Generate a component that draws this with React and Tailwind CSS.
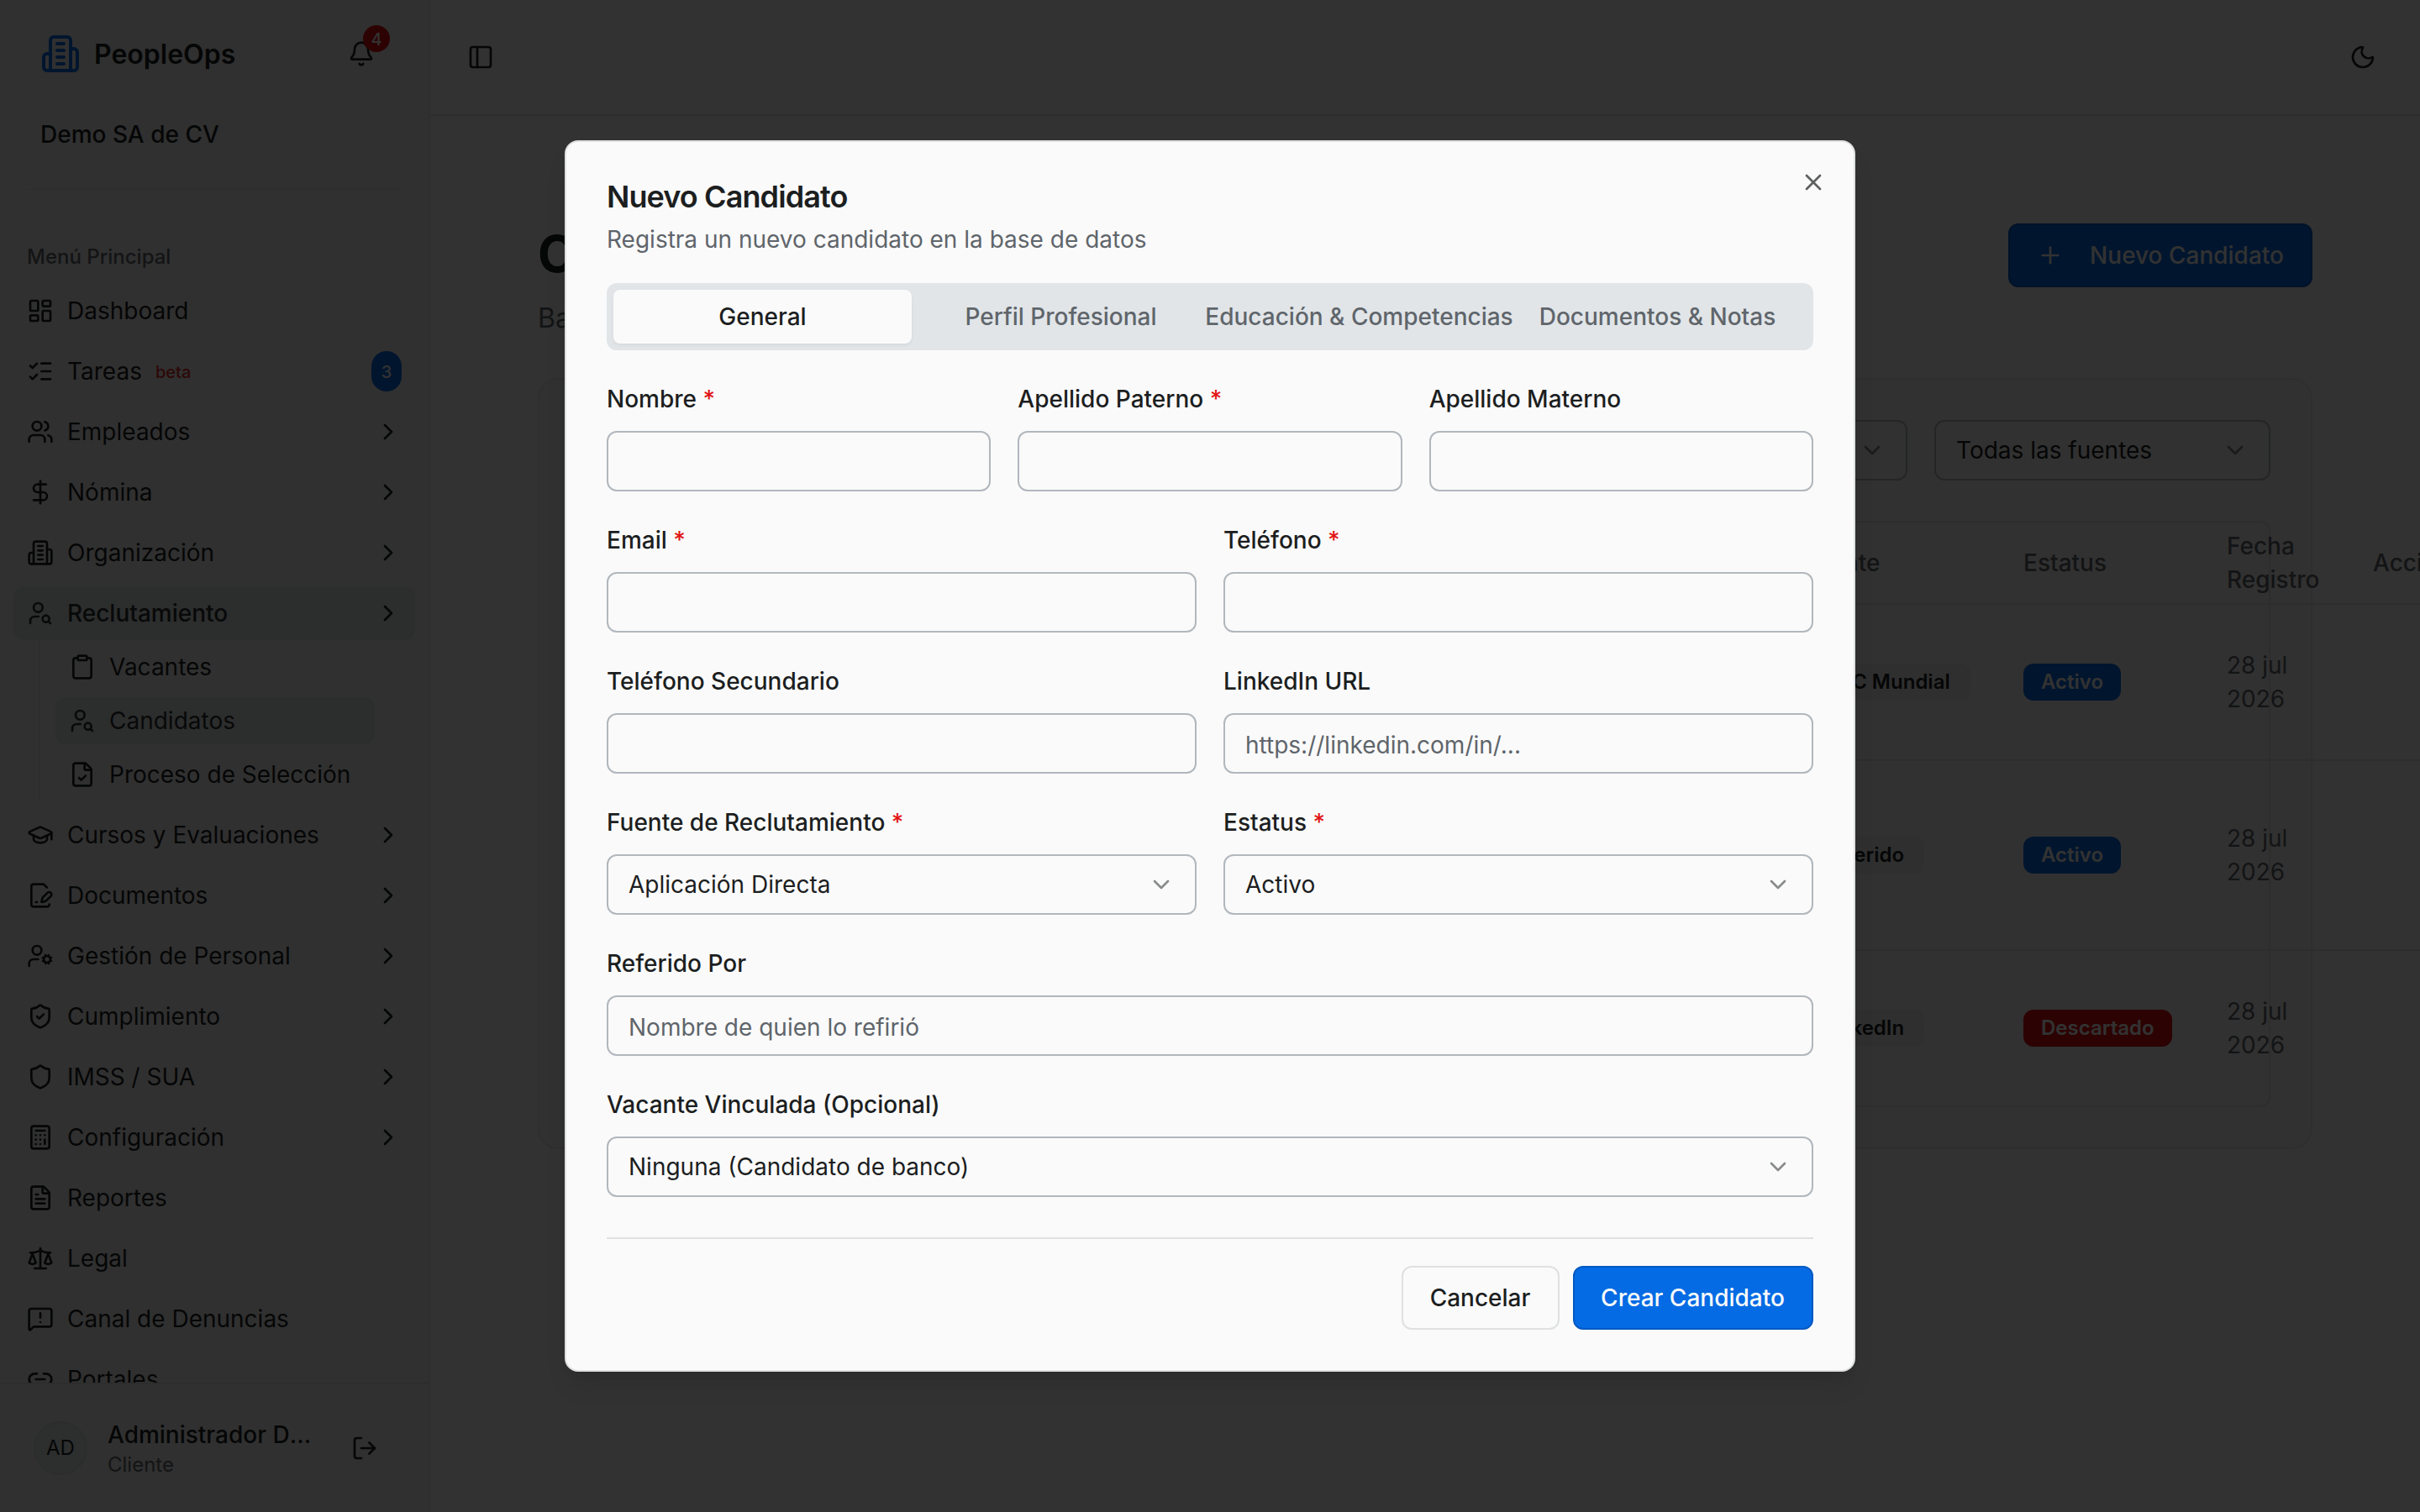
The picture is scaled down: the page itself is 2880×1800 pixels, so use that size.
import React, { useState } from 'react';
import {
    Bell,
    Calculator,
    ChevronDown,
    ChevronRight,
    Clipboard,
    DollarSign,
    FileCheck,
    FileText,
    GraduationCap,
    LayoutDashboard,
    Link2,
    ListChecks,
    MessageSquareWarning,
    Moon,
    PanelLeft,
    Plus,
    Scale,
    Shield,
    ShieldCheck,
    Users,
    X,
} from 'lucide-react';
import clsx from 'clsx';

const svgProps = {
    viewBox: '0 0 24 24',
    fill: 'none',
    stroke: 'currentColor',
    strokeWidth: 2,
    strokeLinecap: 'round',
    strokeLinejoin: 'round',
};

function BuildingIcon({ className }) {
    return (
        <svg {...svgProps} className={className}>
            <path d="M6 22V4a2 2 0 0 1 2-2h8a2 2 0 0 1 2 2v18Z" />
            <path d="M6 12H4a2 2 0 0 0-2 2v6a2 2 0 0 0 2 2h2" />
            <path d="M18 9h2a2 2 0 0 1 2 2v9a2 2 0 0 1-2 2h-2" />
            <path d="M10 6h4" />
            <path d="M10 10h4" />
            <path d="M10 14h4" />
            <path d="M10 18h4" />
        </svg>
    );
}

function UserSearchIcon({ className }) {
    return (
        <svg {...svgProps} className={className}>
            <circle cx="10" cy="7" r="4" />
            <path d="M10.3 15H7a4 4 0 0 0-4 4v2" />
            <circle cx="17" cy="17" r="3" />
            <path d="m21 21-1.9-1.9" />
        </svg>
    );
}

function UserCogIcon({ className }) {
    return (
        <svg {...svgProps} className={className}>
            <circle cx="9" cy="7" r="4" />
            <path d="M10 15H6a4 4 0 0 0-4 4v2" />
            <circle cx="18" cy="15" r="3" />
            <path d="m21.7 16.4-.9-.3" />
            <path d="m15.2 13.9-.9-.3" />
            <path d="m16.6 18.7.3-.9" />
            <path d="m19.1 12.2.3-.9" />
            <path d="m19.6 18.7-.4-1" />
            <path d="m16.8 12.3-.4-1" />
            <path d="m14.3 16.6 1-.4" />
            <path d="m20.7 13.8 1-.4" />
        </svg>
    );
}

function FilePenIcon({ className }) {
    return (
        <svg {...svgProps} className={className}>
            <path d="m18 5-2.414-2.414A2 2 0 0 0 14.172 2H6a2 2 0 0 0-2 2v16a2 2 0 0 0 2 2h12a2 2 0 0 0 2-2" />
            <path d="M21.378 12.626a1 1 0 0 0-3.004-3.004l-4.01 4.012a2 2 0 0 0-.506.854l-.837 2.87a.5.5 0 0 0 .62.62l2.87-.837a2 2 0 0 0 .854-.506z" />
            <path d="M8 18h1" />
        </svg>
    );
}

function LogOutIcon({ className }) {
    return (
        <svg {...svgProps} className={className}>
            <path d="M9 21H5a2 2 0 0 1-2-2V5a2 2 0 0 1 2-2h4" />
            <path d="m16 17 5-5-5-5" />
            <path d="M21 12H9" />
        </svg>
    );
}

const menu = [
    { label: 'Dashboard', icon: LayoutDashboard },
    { label: 'Tareas', icon: ListChecks, tag: 'beta', count: 3 },
    { label: 'Empleados', icon: Users, expandable: true },
    { label: 'Nómina', icon: DollarSign, expandable: true },
    { label: 'Organización', icon: BuildingIcon, expandable: true },
    {
        label: 'Reclutamiento',
        icon: UserSearchIcon,
        expandable: true,
        active: true,
        children: [
            { label: 'Vacantes', icon: Clipboard },
            { label: 'Candidatos', icon: UserSearchIcon, active: true },
            { label: 'Proceso de Selección', icon: FileCheck },
        ],
    },
    { label: 'Cursos y Evaluaciones', icon: GraduationCap, expandable: true },
    { label: 'Documentos', icon: FilePenIcon, expandable: true },
    { label: 'Gestión de Personal', icon: UserCogIcon, expandable: true },
    { label: 'Cumplimiento', icon: ShieldCheck, expandable: true },
    { label: 'IMSS / SUA', icon: Shield, expandable: true },
    { label: 'Configuración', icon: Calculator, expandable: true },
    { label: 'Reportes', icon: FileText },
    { label: 'Legal', icon: Scale },
    { label: 'Canal de Denuncias', icon: MessageSquareWarning },
    { label: 'Portales', icon: Link2 },
];

const candidates = [
    { source: 'OCC Mundial', status: 'Activo', date: '28 jul 2026', height: 'h-[186px] border-b-2' },
    { source: 'Referido', status: 'Activo', date: '28 jul 2026', height: 'h-[226px] border-b-2' },
    { source: 'LinkedIn', status: 'Descartado', date: '28 jul 2026', height: 'h-[184px]' },
];

const tabs = ['General', 'Perfil Profesional', 'Educación & Competencias', 'Documentos & Notas'];

function MenuItem({ item }) {
    const Icon = item.icon;
    return (
        <li>
            <button
                className={clsx(
                    'flex h-16 w-full items-center gap-4 rounded-xl px-4 text-left text-[28px]',
                    item.active && 'bg-[#dce2e2] font-medium text-[#2c2f31]'
                )}
            >
                <Icon className="size-8 shrink-0" />
                <span>{item.label}</span>
                {item.tag && <span className="pt-0.5 text-[20px] font-medium text-[#e12828]">{item.tag}</span>}
                {item.count && (
                    <span className="ml-auto flex h-12 w-9 items-center justify-center rounded-full bg-[#056be4] pt-px text-[20px] font-medium text-[#fafafa]">
                        {item.count}
                    </span>
                )}
                {item.expandable && <ChevronRight className="ml-auto size-8 text-[#1c1e1f]" />}
            </button>
            {item.children && (
                <ul className="ml-[30px] mr-[26px] flex flex-col gap-2 border-l-2 border-[#dfe1e1] py-1 pl-[18px] pr-[22px]">
                    {item.children.map((child) => (
                        <li
                            key={child.label}
                            className={clsx(
                                'flex h-14 items-center gap-4 rounded-xl px-4 text-[28px]',
                                child.active && 'bg-[#dce2e2] text-[#2c2f31]'
                            )}
                        >
                            <child.icon className="size-8 shrink-0" />
                            <span className="whitespace-nowrap">{child.label}</span>
                        </li>
                    ))}
                </ul>
            )}
        </li>
    );
}

function Sidebar() {
    return (
        <aside className="flex h-full w-[512px] shrink-0 flex-col border-r-2 border-[#dfe1e1] bg-[#f0f0f0]">
            <div className="mx-8 flex h-[226px] shrink-0 flex-col border-b-2 border-[#e5e6e6] pt-7">
                <div className="flex h-[72px] items-center pl-4 pr-3">
                    <BuildingIcon className="size-12 text-[#056be4]" />
                    <span className="ml-4 pt-0.5 text-[32px] font-semibold">PeopleOps</span>
                    <button className="relative ml-auto flex size-[72px] items-center justify-center">
                        <Bell className="size-8" />
                        <span className="absolute right-0.5 top-0.5 flex size-8 items-center justify-center rounded-full bg-[#dc0a0a] pt-px text-[20px] font-medium text-[#fafafa]">
                            4
                        </span>
                    </button>
                </div>
                <p className="pl-4 pt-10 text-[28px] font-medium leading-10">Demo SA de CV</p>
            </div>
            <nav className="min-h-0 flex-1 overflow-hidden px-4 pt-12">
                <div className="flex h-16 items-center px-4 text-[24px] font-medium text-[#5f656b]">Menú Principal</div>
                <ul className="flex flex-col gap-2">
                    {menu.map((item) => (
                        <MenuItem key={item.label} item={item} />
                    ))}
                </ul>
            </nav>
            <div className="flex h-[154px] shrink-0 items-center gap-6 border-t-2 border-[#dfe1e1] px-10">
                <div className="flex size-16 shrink-0 items-center justify-center rounded-full border-2 border-[#d7dadb] bg-[#e1e5e5] text-[24px]">
                    AD
                </div>
                <div className="min-w-0 flex-1">
                    <p className="truncate text-[28px] font-medium leading-10">Administrador Demo</p>
                    <p className="text-[24px] leading-8 text-[#5f656b]">Cliente</p>
                </div>
                <button className="flex size-[72px] shrink-0 items-center justify-center">
                    <LogOutIcon className="size-8" />
                </button>
            </div>
        </aside>
    );
}

function FilterSelect({ children }) {
    return (
        <button className="flex h-[72px] w-[400px] items-center justify-between rounded-xl border-2 border-[#b1b7bd] px-6 text-[28px]">
            {children}
            <ChevronDown className="size-8 opacity-50" />
        </button>
    );
}

function CandidatesPage() {
    return (
        <main className="px-32 pt-32">
            <div className="flex h-[152px] items-start justify-between">
                <div>
                    <h1 className="text-[60px] font-bold leading-[72px] tracking-tight">Candidatos</h1>
                    <p className="pt-[17px] text-[32px] leading-12 text-[#5f656b]">Banco de candidatos</p>
                </div>
                <button className="flex h-[76px] w-[362px] items-center justify-between whitespace-nowrap rounded-xl border-2 border-[#0059c4] bg-[#056be4] px-8 text-[28px] font-medium text-[#fafafa]">
                    <Plus className="size-8 shrink-0" />
                    Nuevo Candidato
                </button>
            </div>
            <section className="mt-8 rounded-3xl border-2 border-[#e4e5e5] bg-[#f4f4f4] p-12">
                <div className="flex justify-end gap-8">
                    <FilterSelect>Todos los estatus</FilterSelect>
                    <FilterSelect>Todas las fuentes</FilterSelect>
                </div>
                <div className="mt-12 h-[698px] rounded-xl border-2 border-[#dfe1e1]">
                    <div className="flex w-[2400px] flex-col text-[28px] leading-10">
                        <div className="flex h-[98px] items-center border-b-2 border-[#dfe1e1] pl-[1454px] font-medium text-[#5f656b]">
                            <span className="w-[262px] shrink-0">Fuente</span>
                            <span className="w-[242px] shrink-0">Estatus</span>
                            <span className="w-[174px] shrink-0">
                                Fecha
                                <br />
                                Registro
                            </span>
                            <span>Acciones</span>
                        </div>
                        {candidates.map((c) => (
                            <div
                                key={c.source}
                                className={clsx('flex items-center border-[#dfe1e1] pl-[1454px] text-[#5f656b]', c.height)}
                            >
                                <div className="w-[262px] shrink-0">
                                    <span className="inline-flex h-11 items-center whitespace-nowrap rounded-xl bg-[#ebebeb] pl-[22px] pr-6 text-[24px] font-semibold text-[#1c1e1f]">
                                        {c.source}
                                    </span>
                                </div>
                                <div className="w-[242px] shrink-0">
                                    <span
                                        className={clsx(
                                            'inline-flex h-11 items-center rounded-xl px-[21px] text-[24px] font-semibold text-[#fafafa]',
                                            c.status === 'Activo' ? 'bg-[#056be4]' : 'bg-[#dc0a0a]'
                                        )}
                                    >
                                        {c.status}
                                    </span>
                                </div>
                                <span className="w-[100px]">{c.date}</span>
                            </div>
                        ))}
                    </div>
                </div>
            </section>
        </main>
    );
}

function Field({ label, required, children }) {
    return (
        <div className="flex flex-col gap-[15px]">
            <div className="pt-px text-[32px] leading-[48px]">
                <label className="text-[28px] font-medium leading-none">
                    {label} {required && <span className="text-[#e11414]">*</span>}
                </label>
            </div>
            {children}
        </div>
    );
}

function Input({ placeholder }) {
    return (
        <input
            type="text"
            placeholder={placeholder}
            className="h-[72px] w-full rounded-xl border-2 border-[#b1b7bd] px-6 pt-[3px] text-[28px] placeholder:text-[#5f656b]"
        />
    );
}

function Select({ value }) {
    return (
        <button className="flex h-[72px] w-full items-center justify-between rounded-xl border-2 border-[#b1b7bd] px-6 text-[28px]">
            {value}
            <ChevronDown className="size-8 opacity-50" />
        </button>
    );
}

function CandidateDialog() {
    const [activeTab, setActiveTab] = useState('General');

    return (
        <div className="relative flex w-[1536px] flex-col rounded-2xl border-2 border-[#dfe1e1] bg-[#fafafa] p-12 shadow-[0_20px_30px_-6px_rgba(0,0,0,0.1),0_8px_12px_-8px_rgba(0,0,0,0.1)]">
            <h2 className="pb-0.5 text-[36px] font-semibold leading-[34px] tracking-tight">Nuevo Candidato</h2>
            <p className="mt-3 text-[28px] leading-10 text-[#5f656b]">Registra un nuevo candidato en la base de datos</p>
            <div className="mt-8 grid h-20 grid-cols-4 rounded-xl bg-[#e1e5e8] p-2">
                {tabs.map((tab) => (
                    <button
                        key={tab}
                        onClick={() => setActiveTab(tab)}
                        className={clsx(
                            'flex items-center justify-center whitespace-nowrap rounded-lg text-[28px] font-medium',
                            activeTab === tab
                                ? 'bg-[#fafafa] shadow-[0_2px_4px_rgba(0,0,0,0.05)]'
                                : 'text-[#5f656b]'
                        )}
                    >
                        {tab}
                    </button>
                ))}
            </div>
            <form className="mt-8 flex flex-col gap-8">
                <div className="grid grid-cols-3 gap-8">
                    <Field label="Nombre" required><Input /></Field>
                    <Field label="Apellido Paterno" required><Input /></Field>
                    <Field label="Apellido Materno"><Input /></Field>
                </div>
                <div className="grid grid-cols-2 gap-8">
                    <Field label="Email" required><Input /></Field>
                    <Field label="Teléfono" required><Input /></Field>
                    <Field label="Teléfono Secundario"><Input /></Field>
                    <Field label="LinkedIn URL"><Input placeholder="https://linkedin.com/in/..." /></Field>
                    <Field label="Fuente de Reclutamiento" required><Select value="Aplicación Directa" /></Field>
                    <Field label="Estatus" required><Select value="Activo" /></Field>
                </div>
                <Field label="Referido Por"><Input placeholder="Nombre de quien lo refirió" /></Field>
                <Field label="Vacante Vinculada (Opcional)"><Select value="Ninguna (Candidato de banco)" /></Field>
            </form>
            <div className="mt-12 flex justify-end gap-4 border-t-2 border-[#dfe1e1] pt-8">
                <button className="h-[76px] w-[188px] whitespace-nowrap rounded-xl border-2 border-[#dfe1e1] pr-px text-[28px] font-medium">
                    Cancelar
                </button>
                <button className="h-[76px] w-[286px] whitespace-nowrap rounded-xl border-2 border-[#0059c4] bg-[#056be4] pr-px text-[28px] font-medium text-[#fafafa]">
                    Crear Candidato
                </button>
            </div>
            <button className="absolute right-8 top-8 opacity-70">
                <X className="size-8" />
            </button>
        </div>
    );
}

function App() {
    return (
        <div className="relative h-[1800px] w-[2880px] overflow-hidden bg-[#fafafa] font-['Inter',sans-serif] text-[#1c1e1f]">
            <div className="flex h-full">
                <Sidebar />
                <div className="min-w-0 flex-1 overflow-hidden">
                    <header className="flex h-[138px] items-center justify-between border-b-2 border-[#dfe1e1] px-8">
                        <button className="flex size-14 items-center justify-center">
                            <PanelLeft className="size-8" />
                        </button>
                        <button className="flex size-[72px] items-center justify-center">
                            <Moon className="size-8" />
                        </button>
                    </header>
                    <CandidatesPage />
                </div>
            </div>
            <div className="absolute inset-0 flex items-center justify-center bg-black/80">
                <CandidateDialog />
            </div>
        </div>
    );
}

export default App;
